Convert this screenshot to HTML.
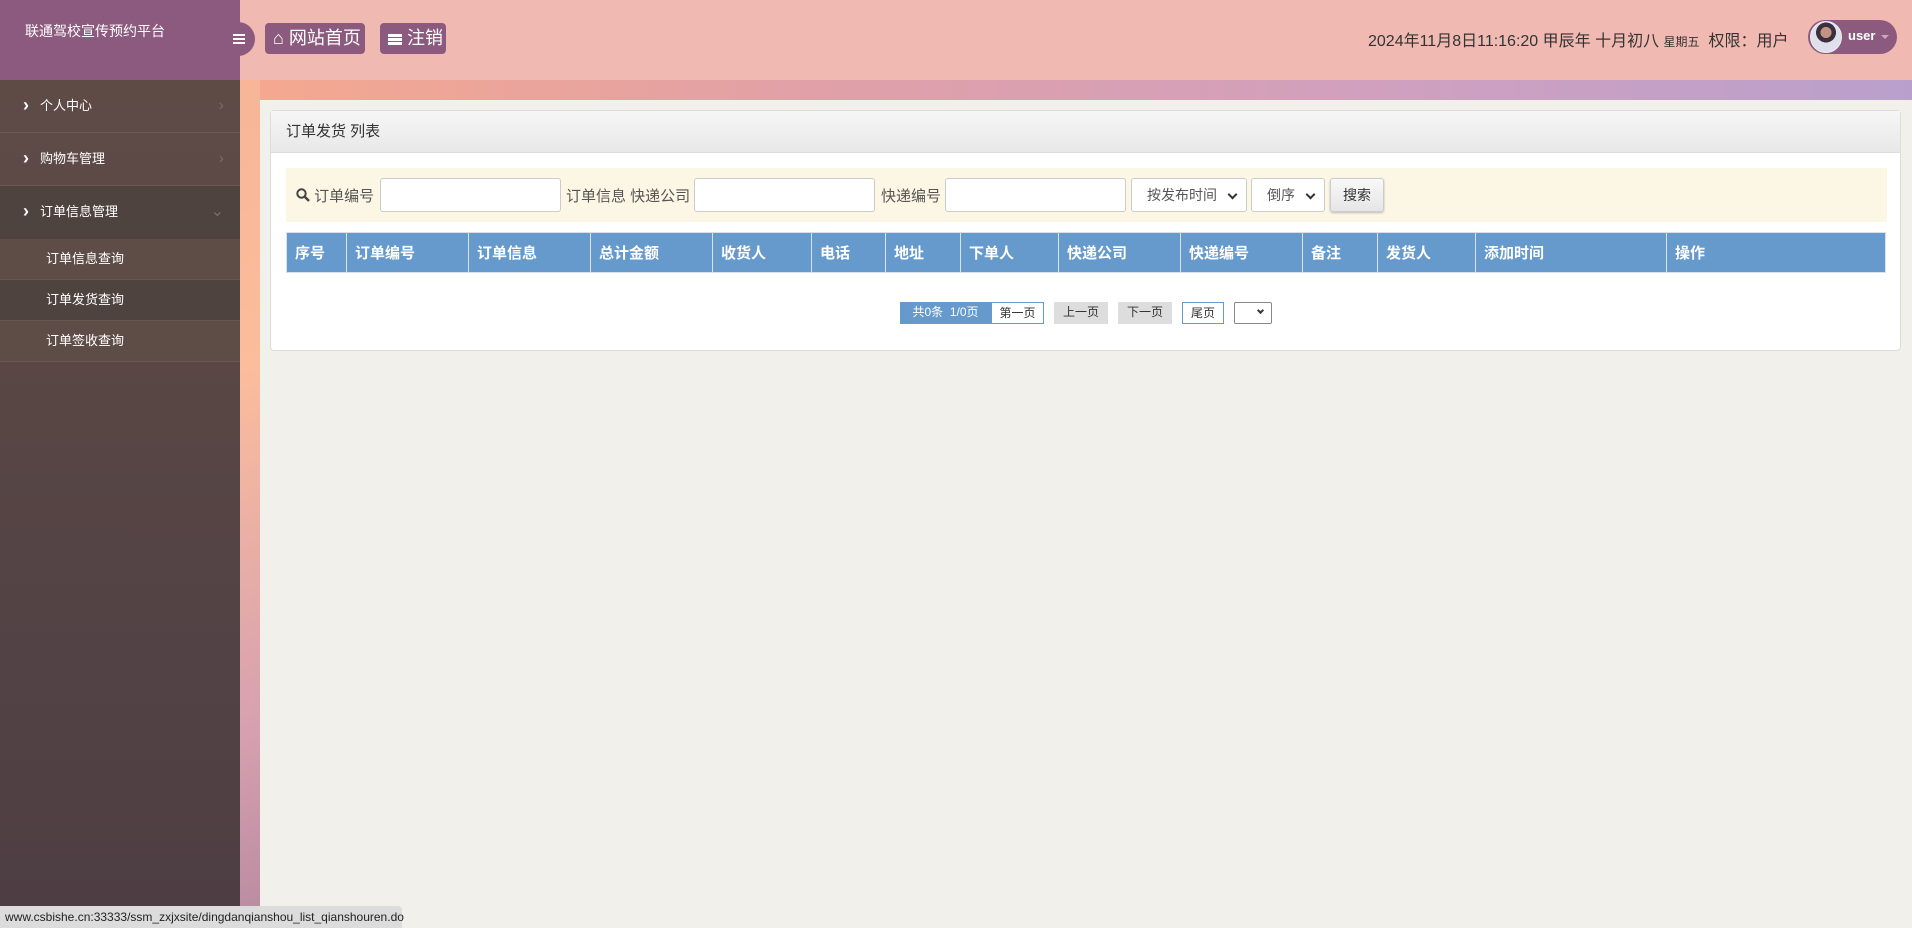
<!DOCTYPE html>
<html><head><meta charset="utf-8"><style>
*{box-sizing:border-box;margin:0;padding:0}
body{width:1912px;height:928px;overflow:hidden;position:relative;font-family:"Liberation Sans","Noto Sans CJK SC",sans-serif;background:#f2f0ea;color:#333}
.bg{position:absolute;left:240px;top:80px;width:1672px;height:848px;background:linear-gradient(160deg,#f8b598 0%,#fbbd9c 20%,#d6a0b0 45%,#a07890 70%,#8f6a88 100%)}
.bg2{position:absolute;left:260px;top:80px;width:1652px;height:20px;background:linear-gradient(90deg,#f4a890,#e0a0a8 35%,#cfa0c0 70%,#b9a0cc)}
.main{position:absolute;left:260px;top:100px;width:1652px;height:828px;background:#f2f0ea}
.hdr{position:absolute;left:0;top:0;width:1912px;height:80px;background:#f0bab2}
.logo{position:absolute;left:0;top:0;width:240px;height:80px;background:#8b5a7e;color:#fff;font-size:14px;padding:21px 0 0 25px}
.tog{position:absolute;left:221px;top:22px;width:34px;height:34px;border-radius:50%;background:#8b5a7e}
.bars{position:absolute;width:12px;height:2px;background:#fff;box-shadow:0 4px #fff,0 8px #fff}
.btn{position:absolute;top:23px;height:31px;background:#8b5a7e;border-radius:4px;color:#fff;font-size:18px;line-height:31px;padding-left:8px}
.side{position:absolute;left:0;top:80px;width:240px;height:848px;background:linear-gradient(180deg,#5f4b46,#4d3e44)}
.mi{height:53px;border-bottom:1px solid #6c5852;color:#fff;font-size:13px;line-height:52px;padding-left:40px;position:relative}
.mi:before{content:"›";position:absolute;left:23px;font-size:18px;font-weight:bold;top:-1px}
.mi i{position:absolute;right:16px;color:#7d6a64;font-style:normal;font-size:16px}
.si{height:41px;line-height:40px;color:#fff;font-size:13px;padding-left:46px;background:#5e4c46;border-bottom:1px solid #6a5751}
.panel{position:absolute;left:270px;top:110px;width:1631px;height:241px;background:#fff;border:1px solid #ddd;border-radius:4px}
.ph{height:42px;background:linear-gradient(#f6f6f6,#e8e8e8);border-bottom:1px solid #ddd;font-size:15px;line-height:41px;padding-left:15px;color:#333}
.sb{position:absolute;left:15px;top:57px;width:1601px;height:54px;background:#fcf6e4}
.lb{position:absolute;top:17px;font-size:15px;color:#555}
.in{position:absolute;top:10px;height:34px;border:1px solid #ccc;border-radius:3px;background:#fff}
.sel{font-size:14px;color:#555;line-height:32px;padding-left:15px}
.sel:after{content:"";position:absolute;right:10px;top:12px;width:5px;height:5px;border-right:2px solid #333;border-bottom:2px solid #333;transform:rotate(45deg)}
table{position:absolute;left:15px;top:121px;border-collapse:collapse}
th{background:#6699cc;color:#fff;font-size:15px;text-align:left;height:40px;padding-left:8px;border:1px solid #d8e2ec;font-weight:bold}
.pg{position:absolute;top:191px;height:22px;font-size:12px;line-height:20px;text-align:center}
</style></head><body>
<div class="bg"></div><div class="bg2"></div><div class="main"></div>
<div class="hdr">
<div class="logo">联通驾校宣传预约平台</div>
<div class="tog"><div class="bars" style="left:12px;top:12px"></div></div>
<div class="btn" style="left:265px;width:100px">⌂ 网站首页</div>
<div class="btn" style="left:380px;width:66px"><span style="display:inline-block;position:relative;width:14px;height:12px;vertical-align:-1px"><span class="bars" style="left:0;top:1px;width:14px;height:3px;box-shadow:0 4px #fff,0 8px #fff"></span></span> 注销</div>
<div style="position:absolute;left:1368px;top:27px;font-size:16px;color:#333;white-space:nowrap">2024年11月8日11:16:20 甲辰年 十月初八 <span style="font-size:12px">星期五</span>&nbsp; 权限：用户</div>
<div style="position:absolute;left:1808px;top:20px;width:89px;height:34px;border-radius:17px;background:#8b5a7e">
<div style="position:absolute;left:2px;top:1px;width:32px;height:32px;border-radius:50%;background:radial-gradient(circle at 50% 35%,#c49480 0 22%,#3a3040 23% 40%,#e0e0e8 41%);border:1px solid #eee"></div>
<div style="position:absolute;left:40px;top:8px;color:#fff;font-size:13px;font-weight:bold">user</div>
<div style="position:absolute;left:73px;top:15px;border:4px solid transparent;border-top-color:#c9a8c0"></div></div>
</div>
<div class="side">
<div class="mi">个人中心<i>›</i></div>
<div class="mi">购物车管理<i>›</i></div>
<div class="mi" style="background:#4f4340;border-bottom:none">订单信息管理<i>⌄</i></div>
<div class="si">订单信息查询</div>
<div class="si" style="background:#4f4340">订单发货查询</div>
<div class="si">订单签收查询</div>
</div>
<div class="panel">
<div class="ph">订单发货 列表</div>
<div class="sb">
<div class="lb" style="left:10px"><svg width="14" height="14" viewBox="0 0 14 14" style="vertical-align:-1px"><circle cx="5.5" cy="5.5" r="4.2" fill="none" stroke="#444" stroke-width="2"/><path d="M8.5 8.5L13 13" stroke="#444" stroke-width="2.4"/></svg> 订单编号</div>
<div class="in" style="left:94px;width:181px"></div>
<div class="lb" style="left:280px">订单信息 快递公司</div>
<div class="in" style="left:408px;width:181px"></div>
<div class="lb" style="left:595px">快递编号</div>
<div class="in" style="left:659px;width:181px"></div>
<div class="in sel" style="left:845px;width:116px">按发布时间</div>
<div class="in sel" style="left:965px;width:74px">倒序</div>
<div class="in" style="left:1044px;width:54px;background:linear-gradient(#f8f8f8,#e6e6e6);font-size:14px;text-align:center;line-height:32px;box-shadow:0 1px 2px #bbb">搜索</div>
</div>
<table><tr>
<th style="width:60px">序号</th><th style="width:122px">订单编号</th><th style="width:122px">订单信息</th><th style="width:122px">总计金额</th><th style="width:99px">收货人</th><th style="width:74px">电话</th><th style="width:75px">地址</th><th style="width:98px">下单人</th><th style="width:122px">快递公司</th><th style="width:122px">快递编号</th><th style="width:75px">备注</th><th style="width:98px">发货人</th><th style="width:191px">添加时间</th><th style="width:219px">操作</th>
</tr></table>
<div class="pg" style="left:629px;width:91px;background:#6699cc;color:#fff">共0条 &nbsp;1/0页</div>
<div class="pg" style="left:720px;width:53px;border:1px solid #6699cc;background:#fff">第一页</div>
<div class="pg" style="left:783px;width:54px;background:#ddd">上一页</div>
<div class="pg" style="left:847px;width:54px;background:#ddd">下一页</div>
<div class="pg" style="left:911px;width:42px;border:1px solid #6699cc;background:#fff">尾页</div>
<div class="pg" style="left:963px;width:38px;border:1px solid #888;border-radius:2px;background:#fff"><span style="position:absolute;right:8px;top:5px;width:5px;height:5px;border-right:2px solid #333;border-bottom:2px solid #333;transform:rotate(45deg)"></span></div>
</div>
<div style="position:absolute;left:0;top:906px;width:402px;height:22px;background:#dcdcdc;border-radius:0 4px 0 0;font-size:12px;line-height:22px;padding-left:5px;color:#222">www.csbishe.cn:33333/ssm_zxjxsite/dingdanqianshou_list_qianshouren.do</div>
</body></html>
